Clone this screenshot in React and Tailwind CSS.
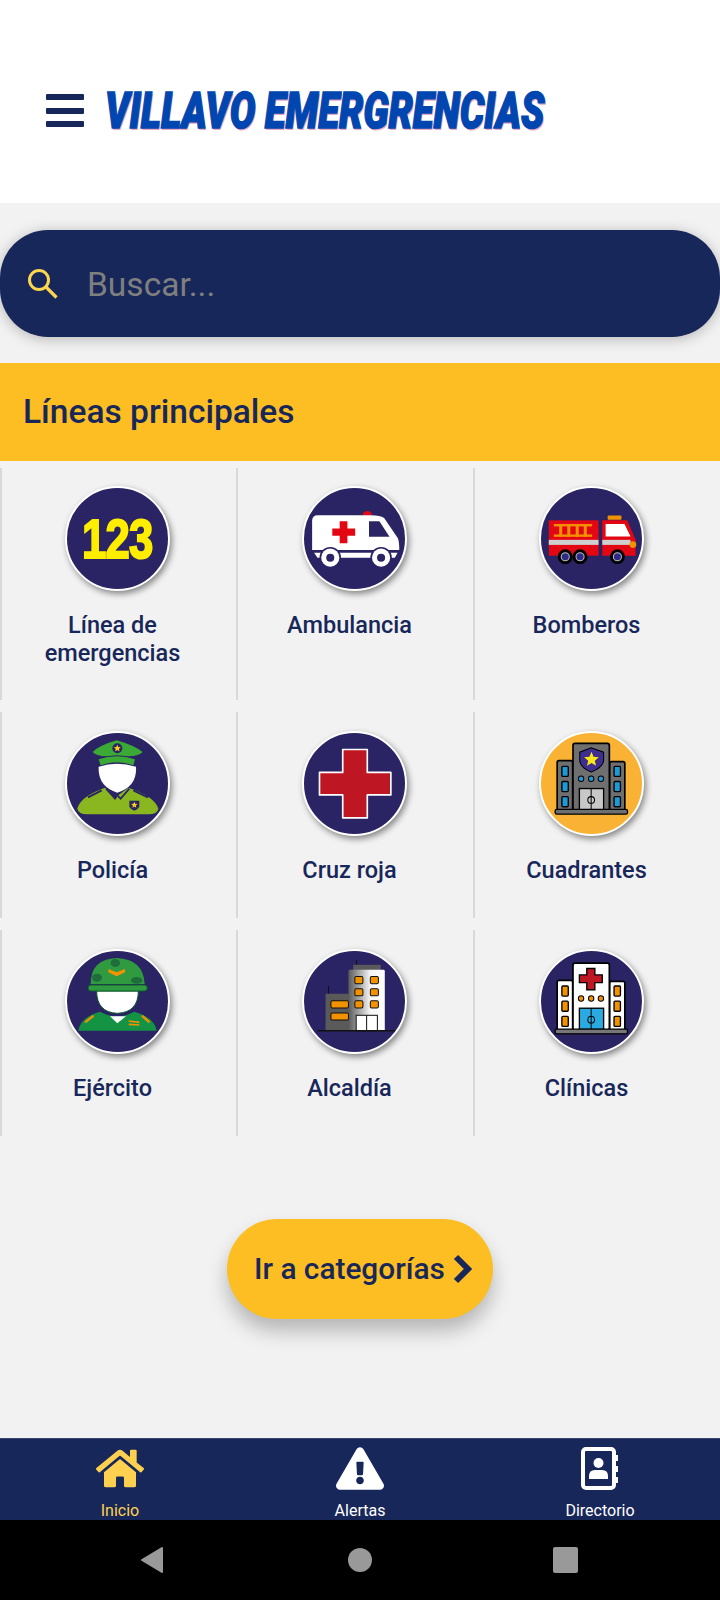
import React from "react";
import { FaHome, FaExclamationTriangle } from "react-icons/fa";

const star = (cx, cy, r) => {
  const p = [];
  for (let i = 0; i < 10; i++) {
    const a = -Math.PI / 2 + (i * Math.PI) / 5;
    const q = i % 2 ? r * 0.45 : r;
    p.push(`${cx + q * Math.cos(a)},${cy + q * Math.sin(a)}`);
  }
  return p.join(" ");
};

const Ambulance = () => (
  <svg viewBox="186 78 312 312" className="w-full h-full">
    <path d="M366 166a14 14 0 0 1 28 0Z" fill="#e30613" />
    <path d="M216 182q0-17 17-17H392q26 0 38 8L470 232q5 8 5 36H216Z" fill="#fff" />
    <path d="M222 276H470L462 291H232Z" fill="#fff" />
    <path d="M298 183h23v21h23v22h-23v22h-23v-22h-22v-22h22Z" fill="#e30613" />
    <path d="M385 183H416L446 229H385Z" fill="#2a2464" />
    <circle cx="270" cy="291" r="32" fill="#2a2464" />
    <circle cx="421" cy="291" r="32" fill="#2a2464" />
    <circle cx="270" cy="291" r="27" fill="#fff" />
    <circle cx="421" cy="291" r="27" fill="#fff" />
    <circle cx="270" cy="291" r="12" fill="#2a2464" />
    <circle cx="421" cy="291" r="12" fill="#2a2464" />
  </svg>
);

const Truck = () => (
  <svg viewBox="178 78 312 312" className="w-full h-full">
    <rect x="382" y="166" width="41" height="12" rx="3" fill="#f39200" />
    <rect x="207" y="180" width="148" height="105" fill="#e30613" />
    <path d="M366 180H440L465 238V285H366Z" fill="#e30613" />
    <path d="M376 191H432L450 228H376Z" fill="#fff" />
    <rect x="207" y="238" width="148" height="15" fill="#cfcfcf" />
    <rect x="366" y="238" width="84" height="15" fill="#cfcfcf" />
    <g fill="#f39200">
      <rect x="222" y="191" width="114" height="7" />
      <rect x="222" y="222" width="114" height="7" />
      <rect x="238" y="191" width="9" height="38" />
      <rect x="262" y="191" width="9" height="38" />
      <rect x="287" y="191" width="9" height="38" />
      <rect x="311" y="191" width="9" height="38" />
    </g>
    <circle cx="457" cy="252" r="10" fill="#f39200" />
    {[256, 300, 411].map((x) => (
      <g key={x}>
        <circle cx={x} cy="288" r="22" fill="#000" />
        <circle cx={x} cy="288" r="12" fill="#2f2a8a" stroke="#bbb" strokeWidth="3" />
      </g>
    ))}
  </svg>
);

const Police = () => (
  <svg viewBox="195 65 315 315" className="w-full h-full">
    <path d="M232 298Q240 262 315 235L345 265L385 235Q465 262 475 298Q472 315 445 315H262Q235 315 232 298Z" fill="#8ab61f" />
    <path d="M296 172Q350 155 408 172Q412 232 352 250Q293 232 296 172Z" fill="#fff" />
    <path d="M318 238L345 268L352 258L362 268L388 238" fill="none" stroke="#2a2464" strokeWidth="5" />
    <path d="M264 264L305 243M400 243L444 264" stroke="#2a2464" strokeWidth="6" fill="none" />
    <path d="M388 274H418V292Q414 300 403 304Q392 300 388 292Z" fill="#2a2464" />
    <polygon points={star(403, 287, 10)} fill="#fcd116" />
    <path d="M278 128Q298 108 350 93Q402 108 428 128Q414 146 350 138Q292 146 278 128Z" fill="#3aa935" />
    <path d="M296 150Q350 132 405 150L400 168Q350 150 302 168Z" fill="#3aa935" />
    <circle cx="352" cy="117" r="15" fill="#2a2464" />
    <polygon points={star(352, 117, 11)} fill="#fcd116" />
  </svg>
);

const Cross = () => (
  <svg viewBox="186 65 312 312" className="w-full h-full">
    <path d="M307 120H380V188H450V255H380V323H307V255H238V188H307Z" fill="#be1622" stroke="#fff" strokeWidth="5" strokeLinejoin="round" />
  </svg>
);

const Station = ({ wall, glass, side, door, ground, children }) => (
  <g stroke="#000" strokeWidth="5">
    <rect x="232" y="153" width="46" height="148" rx="5" fill={side} />
    <rect x="388" y="156" width="45" height="145" rx="5" fill={side} />
    <rect x="279" y="102" width="108" height="199" rx="6" fill={wall} />
    {[170, 215, 260].map((y) => (
      <g key={y}>
        <rect x="246" y={y} width="19" height="30" rx="3" fill={glass} strokeWidth="4" />
        <rect x="401" y={y} width="19" height="30" rx="3" fill={glass} strokeWidth="4" />
      </g>
    ))}
    {[303, 333, 362].map((x) => (
      <circle key={x} cx={x} cy="207" r="8" fill={glass} strokeWidth="3" />
    ))}
    <rect x="298" y="236" width="72" height="63" fill={door} strokeWidth="4" />
    <path d="M333 236V299" strokeWidth="3" />
    <circle cx="333" cy="270" r="10" fill="none" strokeWidth="3" />
    <rect x="226" y="298" width="215" height="14" rx="5" fill={ground} strokeWidth="4" />
    {children}
  </g>
);

const Quadrant = () => (
  <svg viewBox="178 65 312 312" className="w-full h-full">
    <Station wall="#6f6f6f" glass="#1d9ad6" side="#6f6f6f" door="#c8c8c8" ground="#6f6f6f">
      <path d="M333 115L370 128V153Q367 174 333 187Q301 174 299 153V128Z" fill="#3f2d8f" strokeWidth="3" />
      <polygon points={star(334, 150, 23)} fill="#fce716" stroke="none" />
    </Station>
  </svg>
);

const Clinic = () => (
  <svg viewBox="178 60 312 312" className="w-full h-full">
    <Station wall="#fff" glass="#f39200" side="#fff" door="#29abe2" ground="#777">
      <path d="M320 118H344V137H366V160H344V181H320V160H298V137H320Z" fill="#be1622" strokeWidth="4" />
    </Station>
  </svg>
);

const Soldier = () => (
  <svg viewBox="195 60 315 315" className="w-full h-full">
    <path d="M235 305Q240 266 300 248Q352 276 402 248Q465 266 470 305Z" fill="#159344" />
    <path d="M330 262H378L352 283Z" fill="#fff" />
    <path d="M258 278L278 262M428 262L446 278" stroke="#f39200" strokeWidth="7" strokeLinecap="round" />
    <path d="M386 276L418 280M386 286L418 288" stroke="#f39200" strokeWidth="5" />
    <path d="M290 186H415Q415 250 352 253Q290 250 290 186Z" fill="#fff" stroke="#0d5c2c" strokeWidth="3" />
    <path d="M272 165Q272 90 350 87Q430 90 434 165Z" fill="#2f9a3f" />
    <rect x="264" y="168" width="178" height="18" rx="9" fill="#2f9a3f" stroke="#0d5c2c" strokeWidth="3" />
    <path d="M325 120L350 130L375 120V130L350 142L325 130Z" fill="#f39200" />
    <g fill="#1f6d3a">
      <ellipse cx="346" cy="102" rx="14" ry="12" />
      <ellipse cx="291" cy="146" rx="15" ry="12" />
      <ellipse cx="410" cy="154" rx="17" ry="10" />
    </g>
  </svg>
);

const CityHall = () => (
  <svg viewBox="186 60 312 312" className="w-full h-full">
    <defs>
      <linearGradient id="tower" x1="0" x2="1" y1="0" y2="0">
        <stop offset="0" stopColor="#5a5a5a" />
        <stop offset="0.6" stopColor="#f5f5f5" />
        <stop offset="1" stopColor="#ffffff" />
      </linearGradient>
    </defs>
    <path d="M265 170V193M348 93V107" stroke="#111" strokeWidth="3" />
    <rect x="338" y="107" width="82" height="16" fill="#5a5a5a" />
    <rect x="256" y="193" width="70" height="110" rx="3" fill="#5a5a5a" />
    <rect x="324" y="122" width="108" height="181" rx="4" fill="url(#tower)" />
    <g fill="#f39200" stroke="#111" strokeWidth="3">
      {[142, 178, 214].map((y) => (
        <g key={y}>
          <rect x="343" y={y} width="24" height="21" rx="4" />
          <rect x="389" y={y} width="24" height="21" rx="4" />
        </g>
      ))}
      <rect x="272" y="214" width="52" height="21" rx="4" />
      <rect x="272" y="250" width="52" height="21" rx="4" />
    </g>
    <rect x="347" y="257" width="63" height="46" fill="#fff" stroke="#111" strokeWidth="3" />
    <path d="M378 257V303" stroke="#111" strokeWidth="3" />
    <path d="M232 303H462" stroke="#111" strokeWidth="4" />
  </svg>
);

const Emergency = () => (
  <div className="w-full h-full flex items-center justify-center">
    <span className="font-['Liberation_Sans',sans-serif] font-bold text-[56px] leading-none text-[#ffee00] scale-x-[0.78] tracking-[-1px] [-webkit-text-stroke:2px_#ffee00]">
      123
    </span>
  </div>
);

const rows = [
  {
    cls: "h-[232px] pt-[18px]",
    items: [
      { label: <>Línea de<br />emergencias</>, Icon: Emergency },
      { label: "Ambulancia", Icon: Ambulance },
      { label: "Bomberos", Icon: Truck },
    ],
  },
  {
    cls: "h-[206px] pt-[19px]",
    items: [
      { label: "Policía", Icon: Police },
      { label: "Cruz roja", Icon: Cross },
      { label: "Cuadrantes", Icon: Quadrant, amber: true },
    ],
  },
  {
    cls: "h-[206px] pt-[19px]",
    items: [
      { label: "Ejército", Icon: Soldier },
      { label: "Alcaldía", Icon: CityHall },
      { label: "Clínicas", Icon: Clinic },
    ],
  },
];

const Cell = ({ label, Icon, amber, cls, first }) => (
  <div className={`border-l-2 border-[#d9d9d9] flex flex-col items-center ${first ? "pr-[3px]" : "pr-[2px]"} ${cls}`}>
    <div
      className={`w-[105px] h-[105px] shrink-0 rounded-full overflow-hidden border-2 border-white shadow-[2px_3px_6px_rgba(0,0,0,0.45)] ${
        amber ? "bg-[#f9b233]" : "bg-[#2a2464]"
      }`}
    >
      <div className="-m-[2px] w-[105px] h-[105px]">
        <Icon />
      </div>
    </div>
    <div className="mt-[20px] mr-[10px] text-center text-[23.5px] leading-[28px] font-medium text-[#18275a]">
      {label}
    </div>
  </div>
);

export default function App() {
  return (
    <div className="w-[720px] h-[1600px] flex flex-col overflow-hidden bg-[#f2f2f2] font-['Roboto',sans-serif]">
      <header className="h-[203px] shrink-0 bg-white flex items-start pl-[46px] pt-[94px]">
        <div className="w-[38px] flex flex-col gap-[7.5px] shrink-0">
          <span className="block h-[6px] rounded-[1px] bg-[#18275a]" />
          <span className="block h-[6px] rounded-[1px] bg-[#18275a]" />
          <span className="block h-[6px] rounded-[1px] bg-[#18275a]" />
        </div>
        <h1 className="ml-[21px] -mt-[12px] text-[49px] leading-[60px] font-black italic whitespace-nowrap text-[#0046b0] origin-left scale-x-[0.782] [-webkit-text-stroke:1.5px_#0046b0] [text-shadow:1.5px_1.5px_0_#e9a9c0]">
          VILLAVO EMERGRENCIAS
        </h1>
      </header>

      <main className="flex-1 min-h-0 flex flex-col">
        <div className="mt-[27px] h-[107px] shrink-0 rounded-[48px] bg-[#18275a] flex items-center pl-[28px] shadow-[0_2px_14px_rgba(0,0,0,0.25)]">
          <svg width="30" height="30" viewBox="0 0 30 30" fill="none" stroke="#fdd64f" className="shrink-0">
            <circle cx="11" cy="11" r="9.5" strokeWidth="3" />
            <path d="M18 18L28.5 28.5" strokeWidth="3.2" />
          </svg>
          <span className="ml-[29px] mt-[3px] text-[33.5px] text-[#7f7f7f]">Buscar...</span>
        </div>

        <div className="mt-[26px] h-[98px] shrink-0 bg-[#fcbe22] flex items-center pl-[23px]">
          <h2 className="mt-[1px] text-[33.5px] font-medium text-[#18275a]">Líneas principales</h2>
        </div>

        <div className="mt-[7px] flex flex-col gap-y-3">
          {rows.map((row, i) => (
            <div key={i} className="grid grid-cols-[236px_237px_237px]">
              {row.items.map((it, j) => (
                <Cell key={j} {...it} cls={row.cls} first={j === 0} />
              ))}
            </div>
          ))}
        </div>

        <div className="mt-[83px] flex justify-center">
          <button className="w-[266px] h-[100px] rounded-[50px] bg-[#fcbe22] flex items-center pl-[27px] shadow-[0_12px_20px_rgba(0,0,0,0.25)]">
            <span className="text-[29.8px] font-medium text-[#18275a] whitespace-nowrap">Ir a categorías</span>
            <svg width="20" height="30" viewBox="0 0 20 30" fill="none" stroke="#18275a" strokeWidth="6" className="ml-[8px] shrink-0">
              <path d="M3 3L15 15L3 27" />
            </svg>
          </button>
        </div>
      </main>

      <nav className="h-[82px] shrink-0 bg-[#18275a] grid grid-cols-3 border-t border-[#3b4670]">
        <div className="flex flex-col items-center text-[#fdd14f]">
          <FaHome className="w-[48px] h-[43px] mt-[8px]" />
          <span className="mt-[11px] text-[16px] leading-[20px]">Inicio</span>
        </div>
        <div className="flex flex-col items-center text-white">
          <FaExclamationTriangle className="w-[48px] h-[43px] mt-[8px]" />
          <span className="mt-[11px] text-[16px] leading-[20px]">Alertas</span>
        </div>
        <div className="flex flex-col items-center text-white">
          <svg width="38" height="43" viewBox="0 0 38 43" className="mt-[8px]" fill="none">
            <rect x="2" y="2" width="31" height="39" rx="3" stroke="#fff" strokeWidth="4" />
            <path d="M33 8h4v6h-4M33 19h4v6h-4M33 30h4v6h-4" fill="#fff" />
            <circle cx="17.5" cy="16" r="5" fill="#fff" />
            <path d="M8 32v-3q0-6 6-6h7q6 0 6 6v3Z" fill="#fff" />
          </svg>
          <span className="mt-[11px] text-[16px] leading-[20px]">Directorio</span>
        </div>
      </nav>

      <div className="h-[80px] shrink-0 bg-black relative">
        <svg width="24" height="28" viewBox="0 0 24 28" className="absolute left-[140px] top-[26px]">
          <path d="M22 2V26L2 14Z" fill="#999" stroke="#999" strokeWidth="2" strokeLinejoin="round" />
        </svg>
        <div className="absolute left-[348px] top-[28px] w-[24px] h-[24px] rounded-full bg-[#999]" />
        <div className="absolute left-[553px] top-[27px] w-[25px] h-[26px] rounded-[2px] bg-[#999]" />
      </div>
    </div>
  );
}
